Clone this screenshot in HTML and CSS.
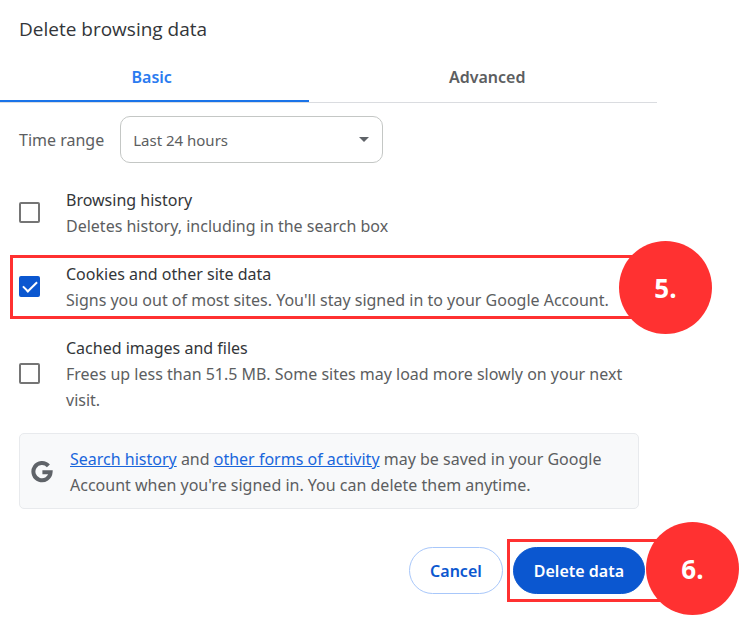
FILE: index.html
```html
<!DOCTYPE html>
<html lang="en">
<head>
    <meta charset="UTF-8">
    <meta name="viewport" content="width=device-width, initial-scale=1.0">
    <title>Delete browsing data</title>
    <link rel="stylesheet" href="styles.css">
</head>
<body>
    <main class="dialog">
        <h1 class="dialog-title">Delete browsing data</h1>

        <div class="tabs" role="tablist">
            <button class="tab tab-basic active" type="button" role="tab" aria-selected="true">Basic</button>
            <button class="tab tab-advanced" type="button" role="tab" aria-selected="false">Advanced</button>
        </div>

        <form class="content">
            <div class="time-range">
                <label for="timeRange">Time range</label>
                <div class="select-wrap">
                    <select id="timeRange">
                        <option>Last hour</option>
                        <option selected>Last 24 hours</option>
                        <option>Last 7 days</option>
                        <option>Last 4 weeks</option>
                        <option>All time</option>
                    </select>
                    <svg class="select-arrow" width="10" height="5" viewBox="0 0 10 5" aria-hidden="true">
                        <path d="M0 0h10L5 5z" fill="#5f6368"/>
                    </svg>
                </div>
            </div>

            <div class="options">
                <label class="option" for="history">
                    <input class="checkbox" type="checkbox" id="history">
                    <span class="option-text">
                        <span class="option-title">Browsing history</span>
                        <span class="option-detail">Deletes history, including in the search box</span>
                    </span>
                </label>

                <div class="callout callout-row">
                    <label class="option" for="cookies">
                        <input class="checkbox" type="checkbox" id="cookies" checked>
                        <span class="option-text">
                            <span class="option-title">Cookies and other site data</span>
                            <span class="option-detail">Signs you out of most sites. You'll stay signed in to your Google Account.</span>
                        </span>
                    </label>
                    <span class="step">5.</span>
                </div>

                <label class="option" for="cache">
                    <input class="checkbox" type="checkbox" id="cache">
                    <span class="option-text">
                        <span class="option-title">Cached images and files</span>
                        <span class="option-detail">Frees up less than 51.5 MB. Some sites may load more slowly on your next visit.</span>
                    </span>
                </label>
            </div>

            <div class="notice">
                <svg class="google-icon" width="22" height="22" viewBox="0 0 22 22" aria-hidden="true">
                    <path d="M17.4 4.9A8.6 8.6 0 1 0 19.6 11.2H11.4" fill="none" stroke="#5f6368" stroke-width="4"/>
                </svg>
                <p><a href="#">Search history</a> and <a href="#">other forms of activity</a> may be saved in your Google Account when you're signed in. You can delete them anytime.</p>
            </div>

            <div class="actions">
                <button class="btn btn-cancel" type="button">Cancel</button>
                <div class="callout callout-btn">
                    <button class="btn btn-delete" type="submit">Delete data</button>
                    <span class="step">6.</span>
                </div>
            </div>
        </form>
    </main>
</body>
</html>
```
FILE: styles.css
```css
* {
    margin: 0;
    padding: 0;
    box-sizing: border-box;
}

body {
    font-family: "Noto Sans", "Open Sans", sans-serif;
    font-size: 16px;
    line-height: 26px;
    background-color: #fff;
    color: #5c5e61;
}

button, select {
    font: inherit;
    cursor: pointer;
}

.dialog {
    margin-right: 86px;
    padding-bottom: 26px;
}

.dialog-title {
    padding: 16px 19px 10px;
    font-family: "Open Sans", sans-serif;
    font-size: 19px;
    font-weight: 400;
    color: #333639;
}

.tabs {
    display: flex;
    border-bottom: 1px solid #dadce0;
}

.tab {
    height: 50px;
    padding-top: 2px;
    border: none;
    border-bottom: 2px solid transparent;
    background: none;
    font-size: 16px;
    font-weight: 600;
    color: #5c5e61;
}

.tab-basic {
    flex: 310;
    padding-right: 6px;
}

.tab-advanced {
    flex: 347;
    padding-left: 8px;
}

.tab.active {
    color: #2a7bf0;
    border-bottom-color: #1a73e8;
}

.content {
    padding: 13px 18px 0 19px;
}

.time-range {
    display: flex;
    align-items: center;
    gap: 16px;
    margin-bottom: 24px;
}

.select-wrap {
    position: relative;
    width: 263px;
}

.select-wrap select {
    appearance: none;
    display: block;
    width: 100%;
    height: 47px;
    padding: 0 32px 0 12px;
    border: 1px solid #c4c7c5;
    border-radius: 10px;
    background-color: #fff;
    font-size: 15px;
    color: #5c5e61;
}

.select-arrow {
    position: absolute;
    top: 21px;
    right: 14px;
    pointer-events: none;
}

.options {
    display: flex;
    flex-direction: column;
    gap: 22px;
    margin-bottom: 20px;
}

.option {
    display: flex;
    align-items: center;
    gap: 26px;
}

.option-title,
.option-detail {
    display: block;
}

.option-title {
    color: #333639;
}

.checkbox {
    appearance: none;
    display: grid;
    place-content: center;
    flex: none;
    width: 21px;
    height: 21px;
    margin-bottom: 2px;
    border: 2px solid #757575;
    border-radius: 2px;
}

.checkbox:checked {
    border-color: #0b57d0;
    background-color: #0b57d0;
}

.checkbox:checked::before {
    content: "";
    width: 12px;
    height: 6px;
    margin-bottom: 3px;
    border-left: 2px solid #fff;
    border-bottom: 2px solid #fff;
    transform: rotate(-45deg);
}

.notice {
    display: flex;
    align-items: center;
    gap: 17px;
    padding: 12px 11px 10px;
    border: 1px solid #e8eaed;
    border-radius: 5px;
    background-color: #f8f9fa;
}

.google-icon {
    flex: none;
}

.notice a {
    color: #1a66dc;
}

.actions {
    display: flex;
    justify-content: flex-end;
    gap: 10px;
    margin: 38px -6px 0 0;
}

.btn {
    display: block;
    height: 47px;
    padding: 0 20px;
    border: 1px solid #a8c7fa;
    border-radius: 24px;
    background-color: #fff;
    font-weight: 600;
    color: #0b57d0;
}

.btn-delete {
    border-color: #0b57d0;
    background-color: #0b57d0;
    color: #fff;
}

/* Red frame and step number around the controls to click */
.callout {
    position: relative;
}

.callout::after {
    content: "";
    position: absolute;
    border: 3px solid #ff3131;
    pointer-events: none;
}

.callout-row::after {
    inset: -6px -26px -6px -9px;
}

.callout-btn::after {
    inset: -8px -26px -8px -6px;
}

.step {
    position: absolute;
    z-index: 1;
    display: flex;
    align-items: center;
    justify-content: center;
    width: 93px;
    height: 93px;
    border-radius: 50%;
    background-color: #ff3131;
    font-family: "Open Sans", sans-serif;
    font-size: 26px;
    font-weight: 700;
    color: #fff;
}

.callout-row .step {
    top: -20px;
    right: -73px;
}

.callout-btn .step {
    top: -25px;
    right: -94px;
}
```
